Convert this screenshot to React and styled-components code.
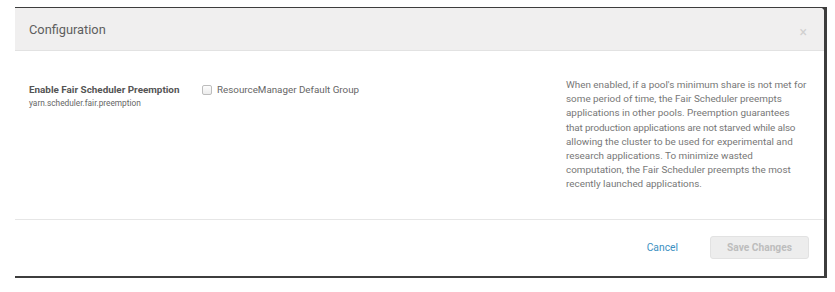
import styled, { createGlobalStyle } from "styled-components";

const GlobalStyle = createGlobalStyle`
  body {
    margin: 0;
    background: #fff;
    font-family: Roboto, "Liberation Sans", Arial, sans-serif;
  }
`;

const Page = styled.div`
  width: 835px;
  height: 292px;
  padding: 7px 0 0 15px;
  box-sizing: border-box;
`;

const Backdrop = styled.div`
  width: 812px;
  background: #3d3d3d;
  padding: 1px 3px 2px 0;
  box-sizing: border-box;
`;

const Modal = styled.div`
  background: #fff;
  border-top-right-radius: 4px;
  display: flex;
  flex-direction: column;
  height: 268px;
`;

const Header = styled.div`
  height: 42px;
  background: #f0efef;
  border-bottom: 1px solid #e2e2e2;
  border-top-right-radius: 4px;
  display: flex;
  align-items: center;
  justify-content: space-between;
  padding: 0 17px 0 14px;
`;

const Title = styled.h4`
  margin: 0;
  font-size: 12.8px;
  font-weight: 400;
  color: #5e5e5e;
  padding-top: 1px;
`;

const Close = styled.span`
  font-size: 14px;
  color: #d0d0d0;
  margin-top: 6px;
`;

const Body = styled.div`
  flex: 1;
  display: flex;
  padding: 32px 8px 0 14px;
  border-bottom: 1px solid #e6e6e6;
`;

const LabelCol = styled.div`
  width: 173px;
`;

const Label = styled.div`
  font-size: 9.9px;
  font-weight: 700;
  color: #555;
  line-height: 14px;
`;

const Sub = styled.div`
  font-size: 8.3px;
  color: #666;
  margin-top: 1px;
`;

const ValueCol = styled.label`
  flex: 1;
  display: flex;
  align-items: flex-start;
  gap: 5px;
  font-size: 9.8px;
  color: #666;
  line-height: 14px;
`;

const Box = styled.span`
  width: 8px;
  height: 8px;
  border: 1px solid #bdbdbd;
  border-radius: 2px;
  background: linear-gradient(#fdfdfd, #ececec);
  margin-top: 2px;
`;

const Desc = styled.div`
  width: 250px;
  margin-top: -5px;
  font-size: 9.9px;
  line-height: 14.2px;
  color: #777;
`;

const DescLine = styled.span`
  display: block;
  white-space: nowrap;
  letter-spacing: ${({ $tight }) => ($tight ? "-0.15px" : "0")};
`;

const Footer = styled.div`
  height: 56px;
  display: flex;
  align-items: center;
  justify-content: flex-end;
  padding: 0 15px 2px 0;
  box-sizing: border-box;
  gap: 32px;
`;

const LinkButton = styled.button`
  border: 0;
  background: none;
  padding: 0;
  font-family: inherit;
  font-size: 10.3px;
  color: #3b8fc1;
`;

const Primary = styled.button`
  width: 99px;
  height: 23px;
  border: 1px solid #e2e2e2;
  border-radius: 3px;
  background: #ededed;
  color: #bdbdbd;
  font-family: inherit;
  font-size: 10.2px;
  font-weight: 700;
  padding: 0;
`;

const description = [
  "When enabled, if a pool's minimum share is not met for",
  "some period of time, the Fair Scheduler preempts",
  "applications in other pools. Preemption guarantees",
  "that production applications are not starved while also",
  "allowing the cluster to be used for experimental and",
  "research applications. To minimize wasted",
  "computation, the Fair Scheduler preempts the most",
  "recently launched applications.",
];

export default function App() {
  return (
    <>
      <GlobalStyle />
      <Page>
        <Backdrop>
          <Modal>
            <Header>
              <Title>Configuration</Title>
              <Close>×</Close>
            </Header>
            <Body>
              <LabelCol>
                <Label>Enable Fair Scheduler Preemption</Label>
                <Sub>yarn.scheduler.fair.preemption</Sub>
              </LabelCol>
              <ValueCol>
                <Box />
                ResourceManager Default Group
              </ValueCol>
              <Desc>
                {description.map((line, i) => (
                  <DescLine key={i} $tight={i === 3}>
                    {line}
                  </DescLine>
                ))}
              </Desc>
            </Body>
            <Footer>
              <LinkButton>Cancel</LinkButton>
              <Primary>Save Changes</Primary>
            </Footer>
          </Modal>
        </Backdrop>
      </Page>
    </>
  );
}
